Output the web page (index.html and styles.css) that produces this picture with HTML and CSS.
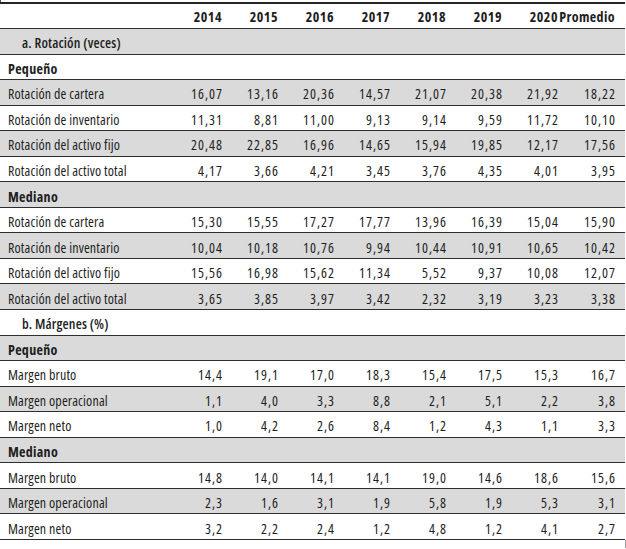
FILE: index.html
```html
<!DOCTYPE html>
<html lang="es">
<head>
<meta charset="utf-8">
<title>Indicadores</title>
<link rel="stylesheet" href="styles.css">
</head>
<body>
<div class="frame-top"></div>
<table class="data">
  <colgroup>
    <col class="c-label">
    <col class="c-num"><col class="c-num"><col class="c-num"><col class="c-num">
    <col class="c-num"><col class="c-num"><col class="c-num"><col class="c-avg">
  </colgroup>
  <thead>
    <tr class="head">
      <th></th><th>2014</th><th>2015</th><th>2016</th><th>2017</th><th>2018</th><th>2019</th><th>2020</th><th>Promedio</th>
    </tr>
  </thead>
  <tbody>
    <tr class="section shade"><td colspan="9">a. Rotación (veces)</td></tr>
    <tr class="group"><td colspan="9">Pequeño</td></tr>
    <tr class="shade"><td>Rotación de cartera</td><td>16,07</td><td>13,16</td><td>20,36</td><td>14,57</td><td>21,07</td><td>20,38</td><td>21,92</td><td>18,22</td></tr>
    <tr><td>Rotación de inventario</td><td>11,31</td><td>8,81</td><td>11,00</td><td>9,13</td><td>9,14</td><td>9,59</td><td>11,72</td><td>10,10</td></tr>
    <tr class="shade"><td>Rotación del activo fijo</td><td>20,48</td><td>22,85</td><td>16,96</td><td>14,65</td><td>15,94</td><td>19,85</td><td>12,17</td><td>17,56</td></tr>
    <tr><td>Rotación del activo total</td><td>4,17</td><td>3,66</td><td>4,21</td><td>3,45</td><td>3,76</td><td>4,35</td><td>4,01</td><td>3,95</td></tr>
    <tr class="group shade"><td colspan="9">Mediano</td></tr>
    <tr><td>Rotación de cartera</td><td>15,30</td><td>15,55</td><td>17,27</td><td>17,77</td><td>13,96</td><td>16,39</td><td>15,04</td><td>15,90</td></tr>
    <tr class="shade"><td>Rotación de inventario</td><td>10,04</td><td>10,18</td><td>10,76</td><td>9,94</td><td>10,44</td><td>10,91</td><td>10,65</td><td>10,42</td></tr>
    <tr><td>Rotación del activo fijo</td><td>15,56</td><td>16,98</td><td>15,62</td><td>11,34</td><td>5,52</td><td>9,37</td><td>10,08</td><td>12,07</td></tr>
    <tr class="shade"><td>Rotación del activo total</td><td>3,65</td><td>3,85</td><td>3,97</td><td>3,42</td><td>2,32</td><td>3,19</td><td>3,23</td><td>3,38</td></tr>
    <tr class="section"><td colspan="9">b. Márgenes (%)</td></tr>
    <tr class="group shade"><td colspan="9">Pequeño</td></tr>
    <tr><td>Margen bruto</td><td>14,4</td><td>19,1</td><td>17,0</td><td>18,3</td><td>15,4</td><td>17,5</td><td>15,3</td><td>16,7</td></tr>
    <tr class="shade"><td>Margen operacional</td><td>1,1</td><td>4,0</td><td>3,3</td><td>8,8</td><td>2,1</td><td>5,1</td><td>2,2</td><td>3,8</td></tr>
    <tr><td>Margen neto</td><td>1,0</td><td>4,2</td><td>2,6</td><td>8,4</td><td>1,2</td><td>4,3</td><td>1,1</td><td>3,3</td></tr>
    <tr class="group shade"><td colspan="9">Mediano</td></tr>
    <tr><td>Margen bruto</td><td>14,8</td><td>14,0</td><td>14,1</td><td>14,1</td><td>19,0</td><td>14,6</td><td>18,6</td><td>15,6</td></tr>
    <tr class="shade"><td>Margen operacional</td><td>2,3</td><td>1,6</td><td>3,1</td><td>1,9</td><td>5,8</td><td>1,9</td><td>5,3</td><td>3,1</td></tr>
    <tr><td>Margen neto</td><td>3,2</td><td>2,2</td><td>2,4</td><td>1,2</td><td>4,8</td><td>1,2</td><td>4,1</td><td>2,7</td></tr>
  </tbody>
</table>
<div class="frame-bottom"></div>
</body>
</html>
```

FILE: styles.css
```css
html, body {
  margin: 0;
  padding: 0;
  background: #ffffff;
}

body {
  font-family: "Open Sans", "DejaVu Sans Condensed", sans-serif;
  font-stretch: 75%;
  font-size: 14px;
  color: #1e1e1e;
}

.frame-top {
  height: 2px;
  width: 0;
  border-left: 1px solid #555555;
}

.frame-bottom {
  box-sizing: border-box;
  width: 626px;
  height: 8px;
  border-right: 1px solid #9a9a9a;
}

.data {
  width: 625px;
  table-layout: fixed;
  border-collapse: separate;
  border-spacing: 0;
  border-top: 2px solid #262626;
}

.c-label { width: 167px; }
.c-num { width: 56px; }
.c-avg { width: 66px; }

.data th,
.data td {
  padding: 0;
  text-align: right;
  white-space: nowrap;
  line-height: 16px;
  letter-spacing: 1px;
  border-bottom: 1px solid #2e2e2e;
  vertical-align: middle;
}

.data td {
  padding-top: 4px;
}

.data td:last-child {
  padding-right: 9px;
}

.data th {
  font-weight: bold;
  letter-spacing: 0.5px;
  padding: 1px 1px 0 0;
}

.data th:last-child {
  letter-spacing: 0.4px;
  padding-right: 10px;
}

.data td:first-child {
  text-align: left;
  padding-left: 8px;
  letter-spacing: 0.15px;
}

.head { height: 25px; }

.data tbody tr { height: 25.55px; }

.shade td { background: #dadada; }

.group td:first-child {
  font-weight: bold;
  letter-spacing: 0.3px;
}

.section td:first-child {
  padding-left: 22px;
  font-weight: 600;
}
```
